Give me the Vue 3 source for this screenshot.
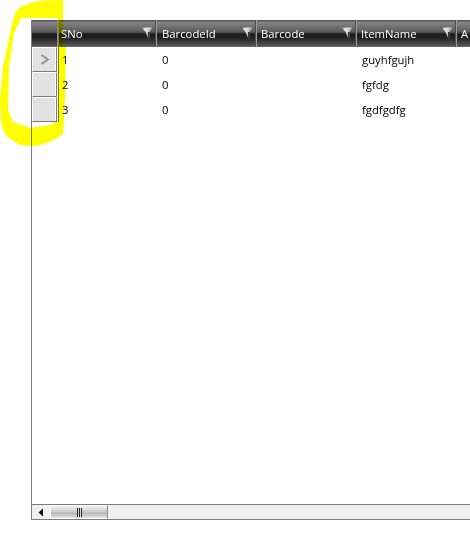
<script setup>
const columns = [
  { name: 'SNo', filter: true },
  { name: 'BarcodeId', filter: true },
  { name: 'Barcode', filter: true },
  { name: 'ItemName', filter: true },
  { name: 'A', filter: false }
]

const rows = [
  { sno: '1', barcodeId: '0', barcode: '', itemName: 'guyhfgujh', current: true },
  { sno: '2', barcodeId: '0', barcode: '', itemName: 'fgfdg', current: false },
  { sno: '3', barcodeId: '0', barcode: '', itemName: 'fgdfgdfg', current: false }
]
</script>

<template>
  <div class="page">
    <div class="grid">
      <div class="header">
        <div class="corner"></div>
        <div v-for="col in columns" :key="col.name" class="col-head">
          <span class="col-name">{{ col.name }}</span>
          <svg v-if="col.filter" class="funnel" width="12" height="13" viewBox="0 0 12 13">
            <defs>
              <linearGradient id="fn" x1="0" y1="0" x2="1" y2="0.5">
                <stop offset="0" stop-color="#666666" />
                <stop offset="0.3" stop-color="#e8e8e8" />
                <stop offset="0.6" stop-color="#d0d0d0" />
                <stop offset="1" stop-color="#777777" />
              </linearGradient>
            </defs>
            <path d="M0.5 0.5H11.5L8.6 5L8.6 12.5L6.8 10.5L4.6 5Z" fill="url(#fn)" />
            <path d="M8.6 5L8.6 12.5L7.2 11L7 5Z" fill="#2c2c2c" />
          </svg>
        </div>
      </div>

      <div class="body">
        <div v-for="row in rows" :key="row.sno" class="row">
          <div class="selector">
            <svg v-if="row.current" width="10" height="11" viewBox="0 0 10 11">
              <path d="M1.5 1L8 5.5L1.5 10" fill="none" stroke="#949494" stroke-width="2" />
            </svg>
          </div>
          <div class="cell">{{ row.sno }}</div>
          <div class="cell">{{ row.barcodeId }}</div>
          <div class="cell">{{ row.barcode }}</div>
          <div class="cell">{{ row.itemName }}</div>
        </div>
      </div>

      <div class="hscroll">
        <div class="arrow-btn">
          <svg width="6" height="9" viewBox="0 0 6 9"><path d="M5 0.5V8.5L0.5 4.5Z" fill="#111" /></svg>
        </div>
        <div class="thumb">
          <span class="grip"></span>
        </div>
      </div>
    </div>

    <!-- marker scribble drawn over the row headers -->
    <svg class="scribble" width="70" height="150" viewBox="0 0 70 150">
      <path
        d="M63 0L46 0.5L33 2L20 7L15 13L11 28L7 48L3 67L0 100L1 120L2 127L7 137L20 145L37 146L52 141L63 134L65 100L66 47L63 46L63 0ZM58 18L58 121L50 125L30 128L13 122L8 110L9 67L14 33L21 18Z"
        fill="#ffff00"
        fill-rule="evenodd"
      />
    </svg>
  </div>
</template>

<style>
html,
body {
  background: #ffffff;
}
</style>

<style scoped>
.page {
  position: relative;
  width: 470px;
  height: 560px;
  overflow: hidden;
  padding: 20px 0 0 31px;
  box-sizing: border-box;
  background: #ffffff;
  font-family: "Open Sans", "Noto Sans", sans-serif;
  font-size: 11px;
}

.grid {
  display: flex;
  flex-direction: column;
  width: 439px;
  height: 500px;
  border-left: 1px solid #7c7c7c;
  border-bottom: 1px solid #7c7c7c;
  box-sizing: border-box;
}

.header {
  display: flex;
  flex: none;
  height: 27px;
  background: linear-gradient(#585858 0, #585858 1px, #858585 2px, #5a5a5a 12px, #1c1c1c 14px, #222222 18px, #585858 26px, #777777 27px);
}

.corner {
  flex: none;
  width: 27px;
  box-sizing: border-box;
  border-right: 2px solid #8a8a8a;
}

.col-head {
  flex: none;
  width: 100px;
  height: 100%;
  box-sizing: border-box;
  display: flex;
  align-items: center;
  justify-content: space-between;
  padding: 0 3px 0 4px;
  border-right: 1px solid #9a9a9a;
  box-shadow: inset -1px 0 0 #4c4c4c;
  color: #ffffff;
  font-size: 11.3px;
}

.col-head:nth-child(2) {
  width: 98px;
  padding-left: 2px;
}

.col-head:nth-child(3) {
  padding-left: 5px;
}

.col-name {
  line-height: 27px;
}

.funnel {
  margin-top: -1px;
}

.body {
  flex: 1;
  min-height: 0;
}

.row {
  display: flex;
  height: 25px;
}

.selector {
  flex: none;
  width: 25px;
  height: 25px;
  box-sizing: border-box;
  border: 1px solid #ffffff;
  border-right-color: #7c7c7c;
  border-bottom-color: #7c7c7c;
  background: #e2e2e2;
  box-shadow: inset -1px 0 0 #ffffff;
  display: flex;
  align-items: center;
  justify-content: center;
}

.cell {
  flex: none;
  width: 100px;
  box-sizing: border-box;
  padding-left: 5px;
  line-height: 25px;
  font-size: 11.3px;
  color: #000000;
}

/* first column sits right of the row header, its border is the 2px rule */
.cell:nth-child(2) {
  padding-left: 4px;
  border-left: 1px solid #ffffff;
  box-shadow: inset 1px 0 0 #7c7c7c;
}

.hscroll {
  flex: none;
  display: flex;
  height: 14px;
  border-top: 1px solid #7c7c7c;
  background: #f0f0f0;
}

.arrow-btn {
  flex: none;
  width: 18px;
  display: flex;
  align-items: center;
  justify-content: center;
}

.thumb {
  flex: none;
  width: 58px;
  box-sizing: border-box;
  border: 1px solid #ffffff;
  border-right-color: #8a8a8a;
  background: linear-gradient(#f2f2f2, #cfcfcf 45%, #b8b8b8 60%, #e4e4e4);
  display: flex;
  align-items: center;
  justify-content: center;
}

.grip {
  width: 5px;
  height: 9px;
  background: repeating-linear-gradient(90deg, #222222 0, #222222 1px, #dddddd 1px, #dddddd 2px);
}

.scribble {
  position: absolute;
  left: 0;
  top: 0;
  mix-blend-mode: multiply;
}
</style>
